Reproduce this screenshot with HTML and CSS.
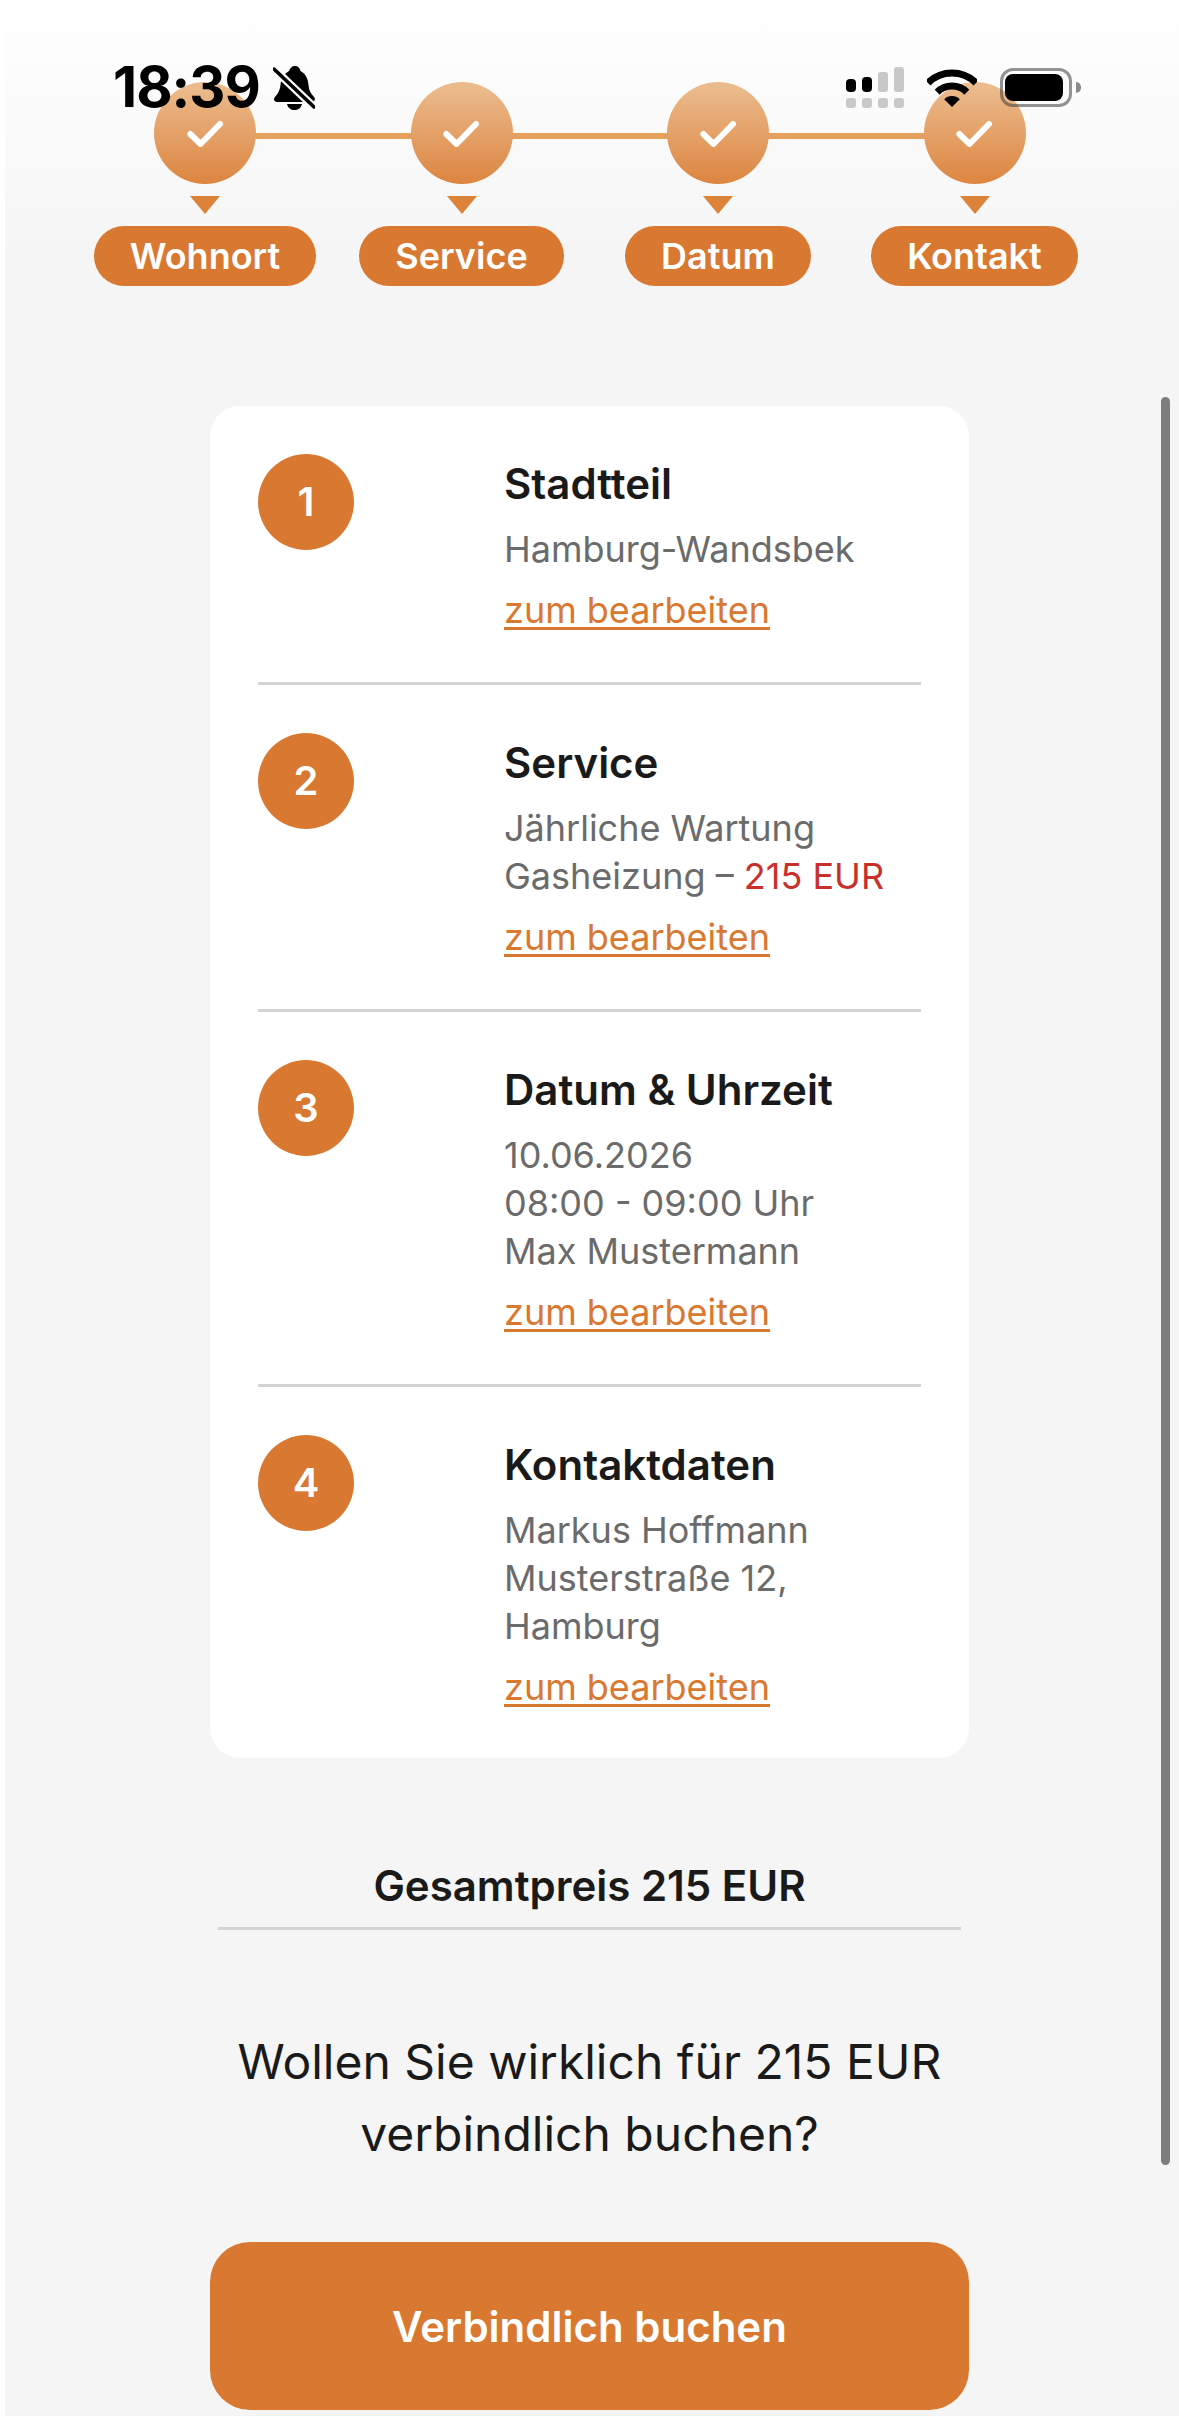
FILE: index.html
```html
<!DOCTYPE html>
<html lang="de">
<head>
    <meta charset="UTF-8">
    <meta name="viewport" content="width=device-width, initial-scale=1.0">
    <title>Buchung bestätigen</title>
    <link rel="stylesheet" href="styles.css">
</head>
<body>
    <div class="status-bar">
        <div class="status-left">
            <span class="clock">18:39</span>
            <svg class="bell" viewBox="0 0 42 44">
                <path d="M22 0c3 0 5 2 5.500 5C33 8 35 13 35.500 19c.3 5 2 8 5.500 12 2 2 .5 5-2 5H4c-3 0-4-3-2-5 3-3 5-7 5.500-12C8 13 11 8 16 5 17 2 19 0 22 0z"/>
                <path d="M14 38h15c-1 4-4 6-7.500 6S15 42 14 38z"/>
                <path class="bell-gap" d="M1 3l40 38"/>
                <path class="bell-slash" d="M1 3l40 38"/>
            </svg>
        </div>
        <div class="status-right">
            <svg class="signal" viewBox="0 0 58 41">
                <rect x="0" y="12" width="10" height="13" rx="4"/>
                <rect x="16" y="10" width="10" height="15" rx="4"/>
                <rect class="off" x="32" y="5" width="10" height="20" rx="3"/>
                <rect class="off" x="48" y="0" width="10" height="25" rx="3"/>
                <rect class="off" x="0" y="31" width="10" height="10" rx="3"/>
                <rect class="off" x="16" y="31" width="10" height="10" rx="3"/>
                <rect class="off" x="32" y="31" width="10" height="10" rx="3"/>
                <rect class="off" x="48" y="31" width="10" height="10" rx="3"/>
            </svg>
            <svg class="wifi" viewBox="0 0 50 38">
                <path class="wifi-arc" d="M1 14A34 34 0 0 1 49 14"/>
                <path class="wifi-arc" d="M10.200 23.200A21 21 0 0 1 39.800 23.200"/>
                <path d="M25 38L17.200 30.200A11 11 0 0 1 32.800 30.200Z"/>
            </svg>
            <div class="battery"><div class="battery-fill"></div></div>
        </div>
    </div>

    <div class="scrollbar"></div>

    <div class="page">
        <div class="stepper">
            <div class="step">
                <div class="step-circle">
                    <svg viewBox="0 0 36 26"><path d="M3.300 13L13.500 23L33 3"/></svg>
                </div>
                <div class="step-arrow"></div>
                <div class="step-label">Wohnort</div>
            </div>
            <div class="step">
                <div class="step-circle">
                    <svg viewBox="0 0 36 26"><path d="M3.300 13L13.500 23L33 3"/></svg>
                </div>
                <div class="step-arrow"></div>
                <div class="step-label">Service</div>
            </div>
            <div class="step">
                <div class="step-circle">
                    <svg viewBox="0 0 36 26"><path d="M3.300 13L13.500 23L33 3"/></svg>
                </div>
                <div class="step-arrow"></div>
                <div class="step-label">Datum</div>
            </div>
            <div class="step">
                <div class="step-circle">
                    <svg viewBox="0 0 36 26"><path d="M3.300 13L13.500 23L33 3"/></svg>
                </div>
                <div class="step-arrow"></div>
                <div class="step-label">Kontakt</div>
            </div>
        </div>

        <div class="content">
            <div class="summary-card">
                <div class="summary-row">
                    <div class="number">1</div>
                    <div class="details">
                        <h2>Stadtteil</h2>
                        <p>Hamburg-Wandsbek</p>
                        <a href="#">zum bearbeiten</a>
                    </div>
                </div>
                <div class="summary-row">
                    <div class="number">2</div>
                    <div class="details">
                        <h2>Service</h2>
                        <p>Jährliche Wartung<br>Gasheizung – <span class="price">215 EUR</span></p>
                        <a href="#">zum bearbeiten</a>
                    </div>
                </div>
                <div class="summary-row">
                    <div class="number">3</div>
                    <div class="details">
                        <h2>Datum &amp; Uhrzeit</h2>
                        <p>10.06.2026<br>08:00 - 09:00 Uhr<br>Max Mustermann</p>
                        <a href="#">zum bearbeiten</a>
                    </div>
                </div>
                <div class="summary-row">
                    <div class="number">4</div>
                    <div class="details">
                        <h2>Kontaktdaten</h2>
                        <p>Markus Hoffmann<br>Musterstraße 12,<br>Hamburg</p>
                        <a href="#">zum bearbeiten</a>
                    </div>
                </div>
            </div>

            <div class="total">Gesamtpreis 215 EUR</div>
            <p class="question">Wollen Sie wirklich für 215 EUR<br>verbindlich buchen?</p>
            <button class="book-button">Verbindlich buchen</button>
        </div>
    </div>
</body>
</html>
```

FILE: styles.css
```css
html, body {
    height: 100%;
    overflow: hidden;
}
body {
    font-family: 'Inter', sans-serif;
    margin: 0;
    padding: 0 0 0 5px;
    background-color: #fff;
    color: #1a1a1a;
}
.page {
    height: 100%;
    background: linear-gradient(#fff 0, #f5f5f5 260px);
}

/* status bar sits on top of the page */
.status-bar {
    position: absolute;
    top: 60px;
    left: 113px;
    width: 959px;
    display: flex;
    justify-content: space-between;
    z-index: 2;
}
.status-left {
    display: flex;
    align-items: flex-start;
    gap: 13px;
}
.clock {
    font-size: 56px;
    font-weight: 700;
    line-height: 54px;
    color: #000;
    letter-spacing: -1px;
}
.bell {
    width: 42px;
    height: 44px;
    margin-top: 6px;
}
.bell-gap {
    fill: none;
    stroke: #fbfbfb;
    stroke-width: 8;
}
.bell-slash {
    fill: none;
    stroke: #000;
    stroke-width: 3.5;
    stroke-linecap: round;
}
.status-right {
    display: flex;
    align-items: flex-start;
    padding-top: 7px;
}
.signal {
    width: 58px;
    height: 41px;
    margin-right: 23px;
}
.signal .off {
    fill: #c8c8c8;
}
.wifi {
    width: 50px;
    height: 38px;
    margin-top: 2px;
    margin-right: 23px;
}
.wifi-arc {
    fill: none;
    stroke: #000;
    stroke-width: 7;
}
.battery {
    position: relative;
    box-sizing: border-box;
    width: 72px;
    height: 39px;
    margin-top: 1px;
    padding: 3px 2px;
    border: 3px solid rgba(60, 60, 60, 0.55);
    border-radius: 13px;
}
.battery::after {
    content: "";
    position: absolute;
    top: 11px;
    right: -12px;
    width: 5px;
    height: 11px;
    background: #8a8a8a;
    border-radius: 0 6px 6px 0;
}
.battery-fill {
    width: 58px;
    height: 27px;
    background: #000;
    border-radius: 8px;
}

.scrollbar {
    position: absolute;
    top: 397px;
    right: 9px;
    width: 9px;
    height: 1768px;
    background: #7d7d7d;
    border-radius: 5px;
}

/* stepper */
.stepper {
    position: relative;
    display: grid;
    grid-template-columns: repeat(4, 256.5px);
    padding: 82px 0 0 71.750px;
}
.stepper::before {
    content: "";
    position: absolute;
    top: 133px;
    left: 200px;
    width: 770px;
    height: 6px;
    background: #e6a05e;
}
.step {
    position: relative;
    display: flex;
    flex-direction: column;
    align-items: center;
}
.step-circle {
    width: 102px;
    height: 102px;
    border-radius: 50%;
    background: linear-gradient(#ecbd90, #dc8540);
    display: flex;
    align-items: center;
    justify-content: center;
}
.step-circle svg {
    width: 36px;
    height: 26px;
    margin: 2px 0 0 -1px;
    fill: none;
    stroke: #fff;
    stroke-width: 6;
    stroke-linecap: round;
    stroke-linejoin: round;
}
.step-arrow {
    width: 0;
    height: 0;
    margin: 12px 0;
    border-left: 15px solid transparent;
    border-right: 15px solid transparent;
    border-top: 18px solid #dc8239;
}
.step-label {
    height: 60px;
    padding: 0 36px;
    border-radius: 30px;
    background-color: #d97830;
    color: #fff;
    font-size: 36px;
    font-weight: 600;
    line-height: 60px;
    white-space: nowrap;
}

/* summary */
.content {
    width: 759px;
    margin: 120px 0 0 205px;
}
.summary-card {
    background: #fff;
    border-radius: 30px;
    padding: 0 48px;
}
.summary-row {
    display: flex;
    padding: 48px 0;
    border-bottom: 3px solid #d4d4d4;
}
.summary-row:last-child {
    border-bottom: none;
    padding-bottom: 47px;
}
.number {
    flex: none;
    width: 96px;
    height: 96px;
    margin-right: 150px;
    border-radius: 50%;
    background-color: #d97830;
    color: #fff;
    font-size: 40px;
    font-weight: 600;
    line-height: 96px;
    text-align: center;
}
.details h2 {
    margin: 0 0 11px;
    font-size: 42px;
    font-weight: 600;
    line-height: 60px;
}
.details p {
    margin: 0 0 13px;
    font-size: 36px;
    line-height: 48px;
    color: #6b6b6b;
}
.details .price {
    color: #c9302c;
}
.details a {
    display: block;
    width: fit-content;
    font-size: 36px;
    line-height: 48px;
    color: #d97830;
    text-decoration-thickness: 3px;
    text-underline-offset: 4px;
}
.total {
    margin: 98px 8px 0 8px;
    padding-bottom: 11px;
    border-bottom: 3px solid #d4d4d4;
    font-size: 42px;
    font-weight: 600;
    line-height: 60px;
    text-align: center;
}
.question {
    margin: 96px 0 72px;
    font-size: 48px;
    line-height: 72px;
    text-align: center;
}
.book-button {
    display: block;
    width: 100%;
    height: 168px;
    border: none;
    border-radius: 40px;
    background-color: #d97830;
    color: #fff;
    font-family: inherit;
    font-size: 42px;
    font-weight: 600;
    cursor: pointer;
}
```
